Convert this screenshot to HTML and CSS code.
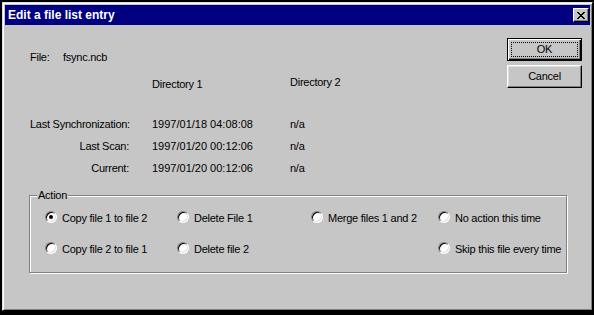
FILE: index.html
```html
<!DOCTYPE html>
<html>
	<head>
		<title>Edit a file list entry</title>
		<link rel="stylesheet" href="styles.css">
	</head>
	<body>
		<div class="window">
			<div class="titlebar">
				<span class="title">Edit a file list entry</span>
				<button class="close">
					<svg width="8" height="7" viewBox="0 0 8 7" shape-rendering="crispEdges"><path d="M0 0h2v1h-2z M6 0h2v1h-2z M1 1h2v1h-2z M5 1h2v1h-2z M2 2h4v1h-4z M3 3h2v1h-2z M2 4h4v1h-4z M1 5h2v1h-2z M5 5h2v1h-2z M0 6h2v1h-2z M6 6h2v1h-2z" fill="#000"/></svg>
				</button>
			</div>
			<div class="client">
				<div class="top">
					<div class="info">
						<div class="file-row">
							<span class="file-label">File:</span>
							<span>fsync.ncb</span>
						</div>
						<div class="dirs">
							<span></span>
							<span class="dir1">Directory 1</span>
							<span>Directory 2</span>
						</div>
						<div class="times">
							<span class="label">Last Synchronization:</span>
							<span class="date">1997/01/18 04:08:08</span>
							<span>n/a</span>
							<span class="label">Last Scan:</span>
							<span class="date">1997/01/20 00:12:06</span>
							<span>n/a</span>
							<span class="label">Current:</span>
							<span class="date">1997/01/20 00:12:06</span>
							<span>n/a</span>
						</div>
					</div>
					<div class="buttons">
						<button class="btn btn-default">OK</button>
						<button class="btn">Cancel</button>
					</div>
				</div>
				<div class="group">
					<div class="group-title">Action</div>
					<div class="options">
						<label class="option"><span class="radio checked"></span>Copy file 1 to file 2</label>
						<label class="option"><span class="radio"></span>Delete File 1</label>
						<label class="option"><span class="radio"></span>Merge files 1 and 2</label>
						<label class="option"><span class="radio"></span>No action this time</label>
						<label class="option"><span class="radio"></span>Copy file 2 to file 1</label>
						<label class="option"><span class="radio"></span>Delete file 2</label>
						<label class="option col4"><span class="radio"></span>Skip this file every time</label>
					</div>
				</div>
			</div>
		</div>
	</body>
</html>
```
FILE: styles.css
```css
* {
	margin: 0; padding: 0;
}

body {
	background: #000;
	font-family: "Liberation Sans", Arial, sans-serif;
	font-size: 11px;
	line-height: 13px;
	letter-spacing: -0.25px;
	color: #000;
}

.window {
	margin: 2px 0 0 2px;
	width: 591px;
	height: 309px;
	box-sizing: border-box;
	padding: 2px;
	background: #c6c6c6;
	border: 1px solid;
	border-color: #dfdfdf #000 #000 #dfdfdf;
	box-shadow: inset 1px 1px #fff, inset -1px -1px #808080;
}

.titlebar {
	height: 20px;
	display: flex;
	justify-content: space-between;
	align-items: center;
	padding: 0 1px 0 3px;
	background: #000080;
	color: #fff;
}

.title {
	font-size: 12px;
	font-weight: 700;
	letter-spacing: 0;
	align-self: flex-start;
	padding-top: 4px;
}

.close {
	width: 16px;
	height: 14px;
	display: flex;
	align-items: center;
	justify-content: center;
	background: #c6c6c6;
	border: 1px solid;
	border-color: #fff #000 #000 #fff;
	box-shadow: inset -1px -1px #808080;
}

.top {
	display: flex;
	justify-content: space-between;
}

.info {
	padding: 26px 0 0 25px;
}

.file-row {
	display: flex;
}

.file-label {
	width: 33px;
}

.dirs, .times {
	display: grid;
	grid-template-columns: 122px 138px auto;
	align-items: start;
	white-space: nowrap;
}

.dirs {
	margin-top: 12px;
}

.dir1 {
	padding-top: 2px;
}

.times {
	margin-top: 27px;
	grid-auto-rows: 22px;
}

.times .label {
	text-align: right;
	padding-right: 23px;
}

.date {
	letter-spacing: 0;
}

.buttons {
	padding-top: 13px;
	margin-right: 8px;
	display: flex;
	flex-direction: column;
	gap: 4px;
}

.btn {
	width: 75px;
	height: 23px;
	box-sizing: border-box;
	background: #c6c6c6;
	border: 1px solid;
	border-color: #fff #000 #000 #fff;
	box-shadow: inset -1px -1px #808080, inset 1px 1px #dfdfdf;
	font: inherit;
	letter-spacing: inherit;
	color: #000;
}

.btn-default {
	border-color: #000;
	box-shadow: inset 1px 1px #fff, inset -1px -1px #000, inset -2px -2px #808080;
	outline: 1px dotted #000;
	outline-offset: -5px;
}

.group {
	margin: 11px 0 0 24px;
	width: 538px;
	height: 78px;
	box-sizing: border-box;
	border: 1px solid #808080;
	box-shadow: 1px 1px 0 #fff, inset 1px 1px 0 #fff;
}

.group-title {
	width: fit-content;
	margin: -7px 0 0 7px;
	padding: 0 1px;
	background: #c6c6c6;
}

.options {
	margin-top: 10px;
	padding-left: 15px;
	display: grid;
	grid-template-columns: 132px 134px 127px auto;
	grid-auto-rows: 13px;
	row-gap: 18px;
}

.option {
	display: flex;
	align-items: flex-start;
	gap: 5px;
	white-space: nowrap;
}

.col4 {
	grid-column: 4;
}

.radio {
	width: 12px;
	height: 12px;
	margin-top: -1px;
	box-sizing: border-box;
	border-radius: 50%;
	background: #fff;
	border: 1px solid;
	border-color: #808080 #fff #fff #808080;
	box-shadow: inset 1px 1px #000, inset -1px -1px #dfdfdf;
	display: flex;
	align-items: center;
	justify-content: center;
}

.radio.checked::after {
	content: "";
	width: 4px;
	height: 4px;
	border-radius: 50%;
	background: #000;
}
```
